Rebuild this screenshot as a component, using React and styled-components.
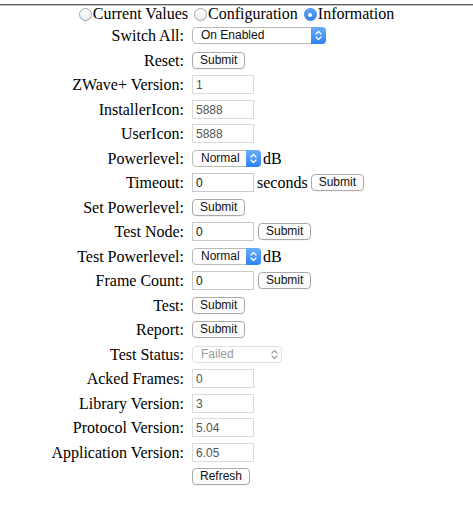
import React from "react";
import styled, { createGlobalStyle } from "styled-components";

const GlobalStyle = createGlobalStyle`
  html, body {
    margin: 0;
    padding: 0;
    background: #ffffff;
    font-family: "Liberation Serif", "Times New Roman", serif;
    font-size: 16px;
    color: #000;
  }
`;

const Page = styled.div`
  width: 473px;
  padding-top: 4px;
`;

const TopRule = styled.div`
  height: 1px;
  background: #5e5e5e;
  border-bottom: 1px solid #c4c4c4;
`;

const ViewTabs = styled.div`
  display: flex;
  justify-content: center;
  align-items: center;
  gap: 6px;
  height: 18px;
  margin-top: -1px;
  line-height: 18px;
`;

const RadioOption = styled.label`
  display: inline-flex;
  align-items: center;
  white-space: nowrap;
`;

const Radio = styled.span`
  box-sizing: border-box;
  width: 13px;
  height: 13px;
  margin: 1px 1px 0 0;
  border-radius: 50%;
  position: relative;
  border: 1px solid ${(p) => (p.$checked ? "#3a87ee" : "#a6a6a6")};
  background: ${(p) =>
    p.$checked
      ? "linear-gradient(#5ea6f7, #2f82f0)"
      : "linear-gradient(#ffffff, #ededed)"};
  box-shadow: 0 0.5px 0.5px rgba(0, 0, 0, 0.12);

  &::after {
    content: "";
    display: ${(p) => (p.$checked ? "block" : "none")};
    position: absolute;
    left: 3.5px;
    top: 3.5px;
    width: 4px;
    height: 4px;
    border-radius: 50%;
    background: #fff;
  }
`;

const Form = styled.div`
  display: grid;
  grid-template-columns: 184px auto;
  column-gap: 8px;
  grid-auto-rows: 24.5px;
  margin-top: 0.5px;
`;

const Label = styled.div`
  text-align: right;
  align-self: center;
  line-height: 18px;
  white-space: nowrap;
  padding-top: 1px;
`;

const Field = styled.div`
  display: flex;
  align-items: center;
  white-space: nowrap;
`;

const Unit = styled.span`
  font-size: 16px;
  line-height: 18px;
  margin: ${(p) => p.$margin || "0 0 0 2px"};
  padding-top: 1px;
`;

const TextBox = styled.input`
  box-sizing: border-box;
  width: 62px;
  height: 19px;
  margin: 0;
  padding: 1px 3px 0;
  border: 1px solid ${(p) => (p.readOnly ? "#dadada" : "#c9c9c9")};
  border-radius: 0;
  background: #fff;
  font-family: "Liberation Sans", Arial, sans-serif;
  font-size: 12px;
  color: ${(p) => (p.readOnly ? "#555" : "#111")};
  outline: none;
`;

const Button = styled.button`
  box-sizing: border-box;
  height: 17px;
  margin: 0 0 0 ${(p) => p.$gap || 0}px;
  padding: 0 7px;
  border: 1px solid #a9a9a9;
  border-radius: 4px;
  background: linear-gradient(#ffffff, #fafafa);
  box-shadow: 0 0.5px 0 rgba(0, 0, 0, 0.08);
  font-family: "Liberation Sans", Arial, sans-serif;
  font-size: 12px;
  line-height: 15px;
  color: #111;
  cursor: pointer;
`;

const SelectWrap = styled.span`
  position: relative;
  display: inline-flex;
  width: ${(p) => p.$width}px;
  height: 17px;
`;

const Select = styled.select`
  appearance: none;
  -webkit-appearance: none;
  box-sizing: border-box;
  width: 100%;
  height: 100%;
  margin: 0;
  padding: 0 0 0 8px;
  border: 1px solid ${(p) => (p.disabled ? "#dedede" : "#b9b9b9")};
  border-radius: 4px;
  background: #fff;
  font-family: "Liberation Sans", Arial, sans-serif;
  font-size: 12px;
  line-height: 15px;
  color: ${(p) => (p.disabled ? "#9a9a9a" : "#111")};
  opacity: 1;
  outline: none;
`;

const ArrowBox = styled.span`
  position: absolute;
  top: 0;
  right: 0;
  width: 15px;
  height: 17px;
  display: flex;
  align-items: center;
  justify-content: center;
  border-radius: 0 4px 4px 0;
  background: ${(p) =>
    p.$disabled ? "transparent" : "linear-gradient(#69aefa, #2c82f3)"};
  pointer-events: none;
`;

const Chevrons = ({ color }) => (
  <svg width="7" height="11" viewBox="0 0 7 11">
    <path
      d="M1 4 L3.5 1.5 L6 4 M1 7 L3.5 9.5 L6 7"
      fill="none"
      stroke={color}
      strokeWidth="1.3"
      strokeLinecap="round"
      strokeLinejoin="round"
    />
  </svg>
);

function DropDown({ width, value, options, disabled }) {
  return (
    <SelectWrap $width={width}>
      <Select value={value} disabled={disabled} onChange={() => {}}>
        {options.map((o) => (
          <option key={o}>{o}</option>
        ))}
      </Select>
      <ArrowBox $disabled={disabled}>
        <Chevrons color={disabled ? "#a0a0a0" : "#ffffff"} />
      </ArrowBox>
    </SelectWrap>
  );
}

const powerlevels = ["Normal", "-1dB", "-2dB", "-3dB", "-4dB", "-5dB", "-6dB", "-7dB", "-8dB", "-9dB"];

export default function App() {
  return (
    <Page>
      <GlobalStyle />
      <TopRule />
      <ViewTabs>
        <RadioOption>
          <Radio />
          Current Values
        </RadioOption>
        <RadioOption>
          <Radio />
          Configuration
        </RadioOption>
        <RadioOption>
          <Radio $checked />
          Information
        </RadioOption>
      </ViewTabs>

      <Form>
        <Label>Switch All:</Label>
        <Field>
          <DropDown
            width={134}
            value="On Enabled"
            options={["Disabled", "Off Enabled", "On Enabled", "On and Off Enabled"]}
          />
        </Field>

        <Label>Reset:</Label>
        <Field>
          <Button>Submit</Button>
        </Field>

        <Label>ZWave+ Version:</Label>
        <Field>
          <TextBox readOnly value="1" />
        </Field>

        <Label>InstallerIcon:</Label>
        <Field>
          <TextBox readOnly value="5888" />
        </Field>

        <Label>UserIcon:</Label>
        <Field>
          <TextBox readOnly value="5888" />
        </Field>

        <Label>Powerlevel:</Label>
        <Field>
          <DropDown width={69} value="Normal" options={powerlevels} />
          <Unit>dB</Unit>
        </Field>

        <Label>Timeout:</Label>
        <Field>
          <TextBox defaultValue="0" />
          <Unit $margin="0 0 0 3px">seconds</Unit>
          <Button $gap={3}>Submit</Button>
        </Field>

        <Label>Set Powerlevel:</Label>
        <Field>
          <Button>Submit</Button>
        </Field>

        <Label>Test Node:</Label>
        <Field>
          <TextBox defaultValue="0" />
          <Button $gap={4}>Submit</Button>
        </Field>

        <Label>Test Powerlevel:</Label>
        <Field>
          <DropDown width={69} value="Normal" options={powerlevels} />
          <Unit>dB</Unit>
        </Field>

        <Label>Frame Count:</Label>
        <Field>
          <TextBox defaultValue="0" />
          <Button $gap={4}>Submit</Button>
        </Field>

        <Label>Test:</Label>
        <Field>
          <Button>Submit</Button>
        </Field>

        <Label>Report:</Label>
        <Field>
          <Button>Submit</Button>
        </Field>

        <Label>Test Status:</Label>
        <Field>
          <DropDown
            width={90}
            value="Failed"
            options={["Failed", "Success", "In Progress"]}
            disabled
          />
        </Field>

        <Label>Acked Frames:</Label>
        <Field>
          <TextBox readOnly value="0" />
        </Field>

        <Label>Library Version:</Label>
        <Field>
          <TextBox readOnly value="3" />
        </Field>

        <Label>Protocol Version:</Label>
        <Field>
          <TextBox readOnly value="5.04" />
        </Field>

        <Label>Application Version:</Label>
        <Field>
          <TextBox readOnly value="6.05" />
        </Field>

        <Label />
        <Field>
          <Button>Refresh</Button>
        </Field>
      </Form>
    </Page>
  );
}
